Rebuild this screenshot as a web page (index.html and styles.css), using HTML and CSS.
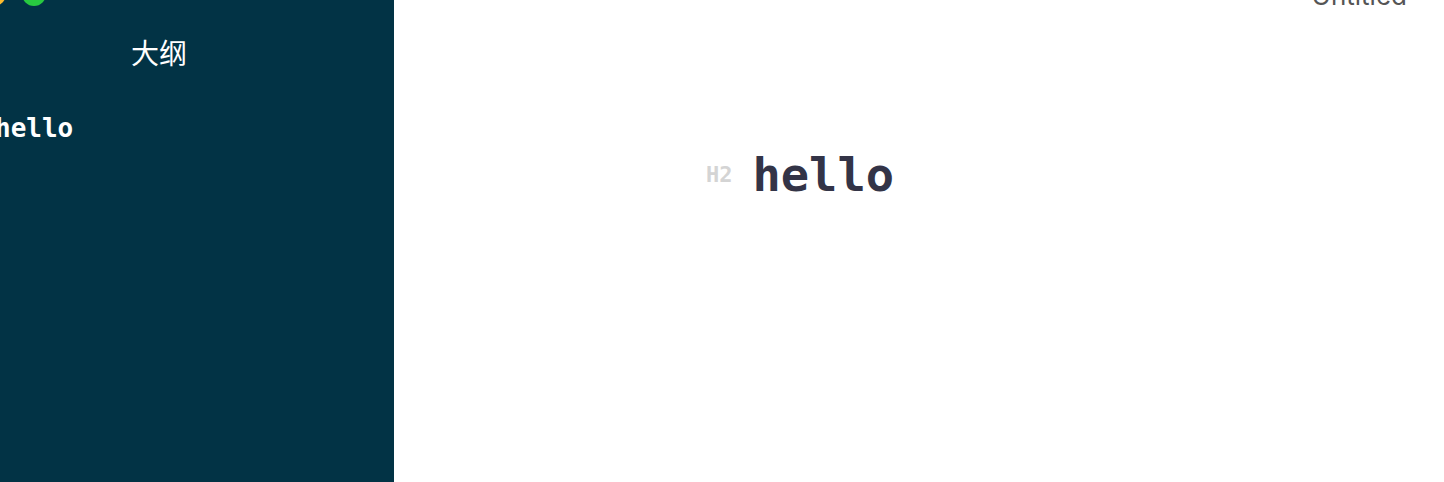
FILE: index.html
```html
<!DOCTYPE html>
<html lang="zh-CN">
<head>
    <meta charset="UTF-8">
    <meta name="viewport" content="width=device-width, initial-scale=1.0">
    <title>Untitled</title>
    <link rel="stylesheet" href="styles.css">
</head>
<body>
    <div class="app">
        <aside class="sidebar">
            <div class="lights">
                <span class="light yellow"></span>
                <span class="light green"></span>
            </div>
            <div class="outline-title">大纲</div>
            <div class="outline-item">hello</div>
        </aside>
        <main class="main">
            <div class="doc-name">Untitled</div>
            <div class="heading">
                <span class="heading-mark">H2</span>
                <h2>hello</h2>
            </div>
        </main>
    </div>
</body>
</html>
```

FILE: styles.css
```css
html, body {
    margin: 0;
    height: 100%;
    overflow: hidden;
    background: #fff;
}
.app {
    display: flex;
    height: 100vh;
}
.sidebar {
    width: 394px;
    flex-shrink: 0;
    background-color: #023345;
    color: #fff;
    overflow: hidden;
}
.lights {
    display: flex;
    gap: 16px;
    margin: -18px 0 0 -18px;
}
.light {
    width: 24px;
    height: 24px;
    border-radius: 50%;
}
.yellow {
    background-color: #fdbc2e;
}
.green {
    background-color: #28c940;
}
.outline-title {
    margin-top: 28px;
    padding-left: 131px;
    font-family: "Noto Sans CJK SC", sans-serif;
    font-size: 28px;
    line-height: 36px;
    font-weight: 400;
}
.outline-item {
    margin: 42px 0 0 -5px;
    font-family: "DejaVu Sans Mono", monospace;
    font-size: 26px;
    line-height: 32px;
    font-weight: 700;
}
.main {
    flex: 1;
    overflow: hidden;
}
.doc-name {
    margin-top: -18px;
    padding-right: 37px;
    text-align: right;
    font-family: "Inter", sans-serif;
    font-size: 26px;
    line-height: 28px;
    color: #555;
}
.heading {
    display: flex;
    align-items: center;
    gap: 20px;
    margin: 133px 0 0 312px;
}
.heading-mark {
    margin-bottom: 2px;
    font-family: "DejaVu Sans Mono", monospace;
    font-size: 22px;
    font-weight: 700;
    color: #d4d4d4;
}
h2 {
    margin: 0;
    font-family: "DejaVu Sans Mono", monospace;
    font-size: 47px;
    line-height: 64px;
    font-weight: 700;
    color: #333447;
}
```
